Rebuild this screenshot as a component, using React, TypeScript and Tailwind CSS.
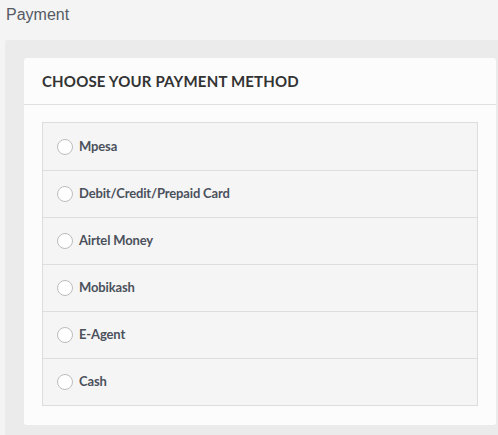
const methods = ["Mpesa", "Debit/Credit/Prepaid Card", "Airtel Money", "Mobikash", "E-Agent", "Cash"];

export default function App() {
  return (
    <div className="min-h-[435px] bg-[#f4f4f4] overflow-hidden">
      <div className="h-[40px] pl-[6px] pt-[3px] text-[16px] text-[#555a63] font-['Liberation_Sans',Arial,sans-serif]">
        Payment
      </div>
      <div className="ml-[5px] h-[395px] rounded-tl-[3px] bg-[#ebebeb] pl-[19px] pr-[2px] pt-[18px]">
        <div className="rounded-[3px] bg-[#fcfcfc] font-['Lato','Open_Sans',sans-serif] pb-[19px]">
          <div className="h-[47px] border-b border-[#e0e0e0] pl-[18px] flex items-center">
            <h2 className="text-[15px] font-bold text-[#333] tracking-[0.18px] pt-[1px]">CHOOSE YOUR PAYMENT METHOD</h2>
          </div>
          <div className="mt-[17px] ml-[18px] mr-[18px] border border-[#dddddd] bg-[#f5f5f5]">
            {methods.map((m, i) => (
              <label
                key={m}
                className={`flex items-center h-[47px] pl-[14px] cursor-pointer ${i > 0 ? "border-t border-[#dedede]" : ""}`}
              >
                <span className="w-[16px] h-[16px] rounded-full border border-[#bdbdbd] bg-white shrink-0" />
                <span className="ml-[6px] text-[13px] font-bold tracking-[-0.15px] text-[#4b515c]">{m}</span>
              </label>
            ))}
          </div>
        </div>
      </div>
    </div>
  );
}
